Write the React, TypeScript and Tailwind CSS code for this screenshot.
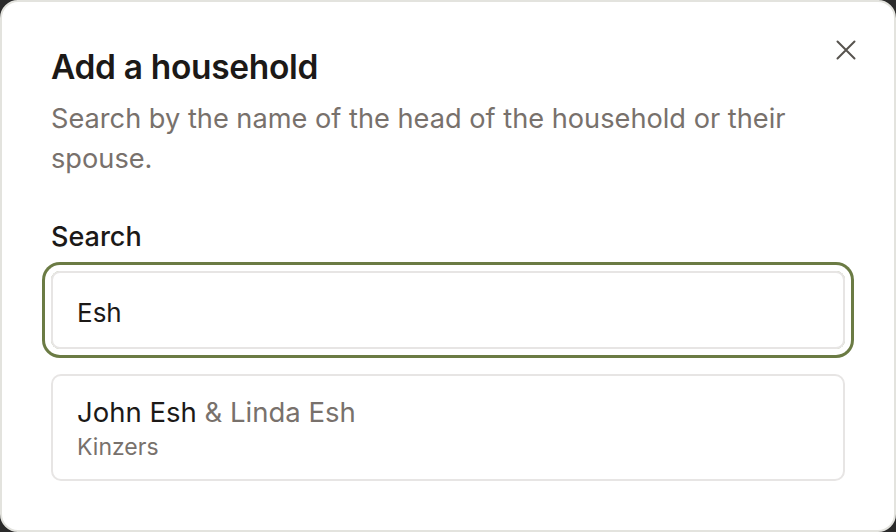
const results = [{ head: "John Esh", spouse: "Linda Esh", town: "Kinzers" }];

export default function App() {
  return (
    <div className="h-[532px] w-[896px] bg-[#2a2a2a] font-['Inter',sans-serif]">
      {/* Dialog */}
      <div className="relative flex h-full flex-col rounded-[18px] border-2 border-[#e3e3de] bg-white px-[49px] pt-[45px]">
        <button className="absolute right-[38px] top-[38px] text-[#57534e]">
          <svg width="20" height="20" viewBox="0 0 20 20" fill="none" stroke="currentColor" strokeWidth="2" strokeLinecap="round">
            <path d="M1.5 1.5l17 17M18.5 1.5l-17 17" />
          </svg>
        </button>

        <h2 className="text-[33.5px] font-semibold leading-[40px] tracking-[-0.01em] text-[#1c1917]">
          Add a household
        </h2>
        <p className="mt-3 pr-4 text-[27.2px] leading-[40px] text-[#78716c]">
          Search by the name of the head of the household or their spouse.
        </p>

        <label className="mt-[38px] text-[27px] font-medium leading-[40px] text-[#1c1917]">
          Search
        </label>
        <div className="mt-[14px] rounded-[9px] border-2 border-[#e7e5e4] px-6 pb-[16px] pt-[22px] text-[26px] leading-[36px] text-[#1c1917] shadow-[0_0_0_6px_#fff,0_0_0_9px_#6b7b44]">
          Esh
        </div>

        {/* Results */}
        <ul className="mt-[25px] flex flex-col gap-3">
          {results.map((r) => (
            <li
              key={r.head}
              className="rounded-[10px] border-2 border-[#e7e5e4] px-6 pb-[15px] pt-[18px]"
            >
              <div className="text-[27.5px] leading-[36px] text-[#1c1917]">
                {r.head} <span className="text-[#78716c]">&amp; {r.spouse}</span>
              </div>
              <div className="text-[23px] leading-[34px] text-[#78716c]">{r.town}</div>
            </li>
          ))}
        </ul>
      </div>
    </div>
  );
}
